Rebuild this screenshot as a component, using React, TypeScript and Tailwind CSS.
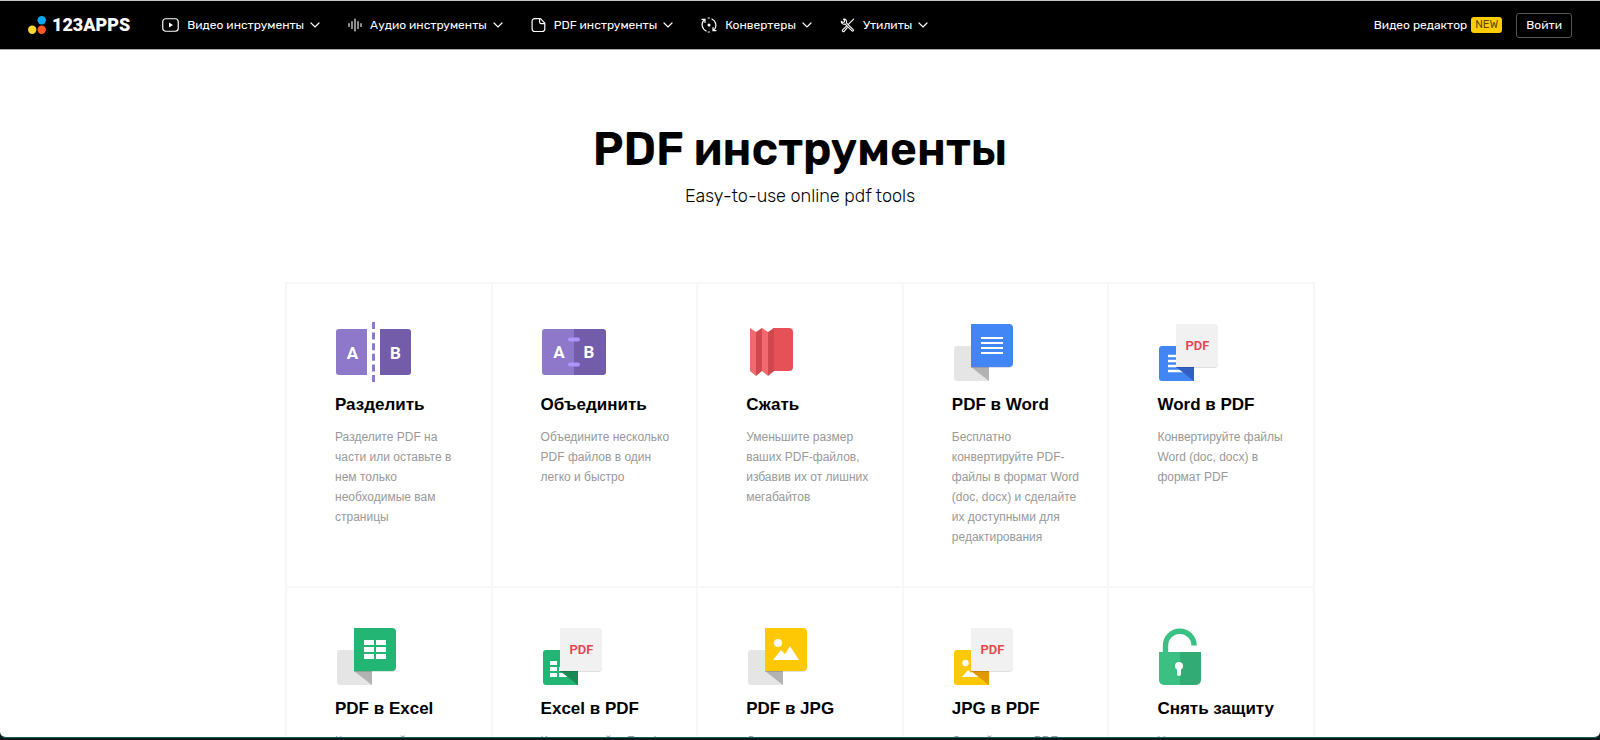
import React from 'react';

const RUBIK = "font-[Rubik,Roboto,'Liberation_Sans',sans-serif]";

type IconProps = { className?: string };

interface NavItem { label: string; icon: React.FC<IconProps>; }
interface Tool { title: string; text: string; icon: React.FC; }

/* ---------- header icons ---------- */

const VideoIcon = ({ className }: IconProps) => (
  <svg className={className} width="17" height="16" viewBox="0 0 17 16" fill="none" aria-hidden="true">
    <rect x="0.75" y="1.75" width="15.5" height="12.5" rx="3" stroke="currentColor" strokeWidth="1.2" />
    <path d="M7 5.6v4.8L11 8z" fill="currentColor" />
  </svg>
);

const AudioIcon = ({ className }: IconProps) => (
  <svg className={className} width="14" height="16" viewBox="0 0 14 16" fill="none" stroke="currentColor" strokeWidth="1.1" strokeLinecap="round" aria-hidden="true">
    <path d="M1 6.5v3M4 4.5v7M7 2v12M10 4.5v7M13 6.5v3" />
  </svg>
);

const FileIcon = ({ className }: IconProps) => (
  <svg className={className} width="15" height="16" viewBox="0 0 15 16" fill="none" stroke="currentColor" strokeWidth="1.2" strokeLinejoin="round" aria-hidden="true">
    <path d="M3.5 1.7h6l4.3 4.5v5.9a2.4 2.4 0 0 1-2.4 2.4H3.5a2.4 2.4 0 0 1-2.4-2.4v-8a2.4 2.4 0 0 1 2.4-2.4z" />
    <path d="M8.6 1.9v3.2a1.6 1.6 0 0 0 1.6 1.6h3.4" />
  </svg>
);

const ConvertIcon = ({ className }: IconProps) => (
  <svg className={className} width="16" height="16" viewBox="0 0 16 16" fill="none" stroke="currentColor" strokeWidth="1.2" strokeLinecap="round" aria-hidden="true">
    <path d="M5.2 14A6.8 6.8 0 0 1 3.3 2.8M1 2.4h3v3" />
    <path d="M10.8 2a6.8 6.8 0 0 1 1.9 11.2M15 13.6h-3v-3" />
    <path d="M7.2 1h1.2M7.2 15h1.2" />
    <circle cx="8" cy="8" r="1.5" fill="currentColor" stroke="none" />
  </svg>
);

const ToolsIcon = ({ className }: IconProps) => (
  <svg className={className} width="15" height="16" viewBox="0 0 15 16" fill="none" stroke="currentColor" strokeWidth="1.1" strokeLinecap="round" strokeLinejoin="round" aria-hidden="true">
    <path d="M13.6 2.2 8.4 7.4M6.2 9.4l-3.6 3.4a1.1 1.1 0 0 0 1.6 1.5l3-3.6" />
    <path d="M3.4 2.2a2.6 2.6 0 0 1 3 3.6l6.8 6.8a.8.8 0 0 1-1.2 1.2L5 6.9A2.6 2.6 0 0 1 1.3 4.2l1.6 1.2 1.5-.4.2-1.4z" />
  </svg>
);

const Chevron = () => (
  <svg width="10" height="6" viewBox="0 0 10 6" fill="none" stroke="currentColor" strokeWidth="1.2" strokeLinecap="round" aria-hidden="true">
    <path d="M1 1l4 4 4-4" />
  </svg>
);

/* ---------- tool icons ---------- */

const Canvas = ({ children }: { children: React.ReactNode }) => (
  <svg width="80" height="64" viewBox="0 0 80 64" fill="none" aria-hidden="true">{children}</svg>
);

const Letter = ({ x, y, children }: { x: number; y: number; children: string }) => (
  <text x={x} y={y} textAnchor="middle" fontSize="17" fontWeight="700" fill="#fff" className="font-[Roboto,sans-serif]">{children}</text>
);

const SplitIcon = () => (
  <Canvas>
    <path d="M4 9h28v46H4a3 3 0 0 1-3-3V12a3 3 0 0 1 3-3z" fill="#8d78c9" />
    <path d="M45 9h28a3 3 0 0 1 3 3v40a3 3 0 0 1-3 3H45z" fill="#735dab" />
    <path d="M38.5 2v60" stroke="#8d78c9" strokeWidth="3" strokeDasharray="7 3.6" />
    <Letter x={17.5} y={39}>A</Letter>
    <Letter x={60.5} y={39}>B</Letter>
  </Canvas>
);

const MergeIcon = () => (
  <Canvas>
    <path d="M4 9h30v46H4a3 3 0 0 1-3-3V12a3 3 0 0 1 3-3z" fill="#8d78c9" />
    <path d="M33 9h29a3 3 0 0 1 3 3v40a3 3 0 0 1-3 3H33z" fill="#735dab" />
    <rect x="27" y="17.5" width="12" height="4" rx="2" fill="#ae93fb" />
    <rect x="27" y="42.5" width="12" height="4" rx="2" fill="#ae93fb" />
    <Letter x={18} y={38}>A</Letter>
    <Letter x={48} y={38}>B</Letter>
  </Canvas>
);

const CompressIcon = () => (
  <Canvas>
    <path d="M27 8h16a4 4 0 0 1 4 4v35a4 4 0 0 1-4 4H27z" fill="#e65157" />
    <path d="M4 8l6 4v44l-6-5zM16 8l6 4v44l-6-5z" fill="#f2696f" />
    <path d="M16 8l-6 4v44l6-5zM28 8l-6 4v44l6-5z" fill="#d0484e" />
  </Canvas>
);

// Back sheet, folded corner and front sheet shared by all conversion icons
const Sheets = ({ back, fold, front, backArt, children }: {
  back: string; fold: string; front: string; backArt?: React.ReactNode; children: React.ReactNode;
}) => (
  <Canvas>
    <path d="M5 26h32v35H5a3 3 0 0 1-3-3V29a3 3 0 0 1 3-3z" fill={back} />
    {backArt}
    <path d="M19 47h18v14z" fill={fold} />
    <path d="M19 5h38a4 4 0 0 1 4 4v35a4 4 0 0 1-4 4H19z" fill="#000" opacity="0.12" />
    <path d="M19 4h38a4 4 0 0 1 4 4v35a4 4 0 0 1-4 4H19z" fill={front} />
    {children}
  </Canvas>
);

const PdfMark = () => (
  <text x="40.500" y="30" textAnchor="middle" fontSize="13" fontWeight="600" fill="#e5454b" className="font-[Roboto,sans-serif]">PDF</text>
);

const PdfToWordIcon = () => (
  <Sheets back="#e5e5e5" fold="#b2b2b2" front="#4285f4">
    <path d="M29 18h22M29 23h22M29 28h22M29 33h22" stroke="#fff" strokeWidth="2" />
  </Sheets>
);

const WordToPdfIcon = () => (
  <Sheets back="#4285f4" fold="#315fc4" front="#f1f1f1"
    backArt={<path d="M11 36h17M11 41h17M11 46h17M11 51h17" stroke="#fff" strokeWidth="2.4" />}>
    <PdfMark />
  </Sheets>
);

const PdfToExcelIcon = () => (
  <Sheets back="#e5e5e5" fold="#b2b2b2" front="#23b574">
    <path d="M29 16h10v5H29zM41 16h10v5H41zM29 23h10v5H29zM41 23h10v5H41zM29 30h10v5H29zM41 30h10v5H41z" fill="#fff" />
  </Sheets>
);

const ExcelToPdfIcon = () => (
  <Sheets back="#23b574" fold="#1a8a55" front="#f1f1f1"
    backArt={<path d="M9 37h7v4H9zM9 43h7v4H9zM9 49h7v4H9zM18 49h8v4h-8zM18 43h8v4h-8z" fill="#fff" />}>
    <PdfMark />
  </Sheets>
);

const PdfToJpgIcon = () => (
  <Sheets back="#e5e5e5" fold="#b2b2b2" front="#ffc805">
    <circle cx="32" cy="19" r="4" fill="#fff" />
    <path d="M27 36l8-10 4 4 5-8 9 14z" fill="#fff" />
  </Sheets>
);

const JpgToPdfIcon = () => (
  <Sheets back="#ffc805" fold="#e09900" front="#f1f1f1"
    backArt={<><circle cx="13.5" cy="39" r="3.2" fill="#fff" /><path d="M10 53l6-7 3 3 2-2 7 6z" fill="#fff" /></>}>
    <PdfMark />
  </Sheets>
);

const UnlockIcon = () => (
  <Canvas>
    <path d="M8.500 30v-8.500a14.300 14.300 0 0 1 28.600 0" stroke="#3bc084" strokeWidth="5.400" />
    <path d="M2 28h21v33H7a5 5 0 0 1-5-5z" fill="#3bc084" />
    <path d="M23 28h21v28a5 5 0 0 1-5 5H23z" fill="#33ab74" />
    <circle cx="22" cy="42" r="4" fill="#fff" />
    <path d="M22 43v7" stroke="#fff" strokeWidth="4" strokeLinecap="round" />
  </Canvas>
);

/* ---------- data ---------- */

const NAV: NavItem[] = [
  { label: 'Видео инструменты', icon: VideoIcon },
  { label: 'Аудио инструменты', icon: AudioIcon },
  { label: 'PDF инструменты', icon: FileIcon },
  { label: 'Конвертеры', icon: ConvertIcon },
  { label: 'Утилиты', icon: ToolsIcon },
];

const TOOLS: Tool[] = [
  { title: 'Разделить', text: 'Разделите PDF на части или оставьте в нем только необходимые вам страницы', icon: SplitIcon },
  { title: 'Объединить', text: 'Объедините несколько PDF файлов в один легко и быстро', icon: MergeIcon },
  { title: 'Сжать', text: 'Уменьшите размер ваших PDF-файлов, избавив их от лишних мегабайтов', icon: CompressIcon },
  { title: 'PDF в Word', text: 'Бесплатно конвертируйте PDF-файлы в формат Word (doc, docx) и сделайте их доступными для редактирования', icon: PdfToWordIcon },
  { title: 'Word в PDF', text: 'Конвертируйте файлы Word (doc, docx) в формат PDF', icon: WordToPdfIcon },
  { title: 'PDF в Excel', text: 'Конвертируйте документы PDF в Excel', icon: PdfToExcelIcon },
  { title: 'Excel в PDF', text: 'Конвертируйте Excel в PDF', icon: ExcelToPdfIcon },
  { title: 'PDF в JPG', text: 'Сохраните страницы PDF в JPG', icon: PdfToJpgIcon },
  { title: 'JPG в PDF', text: 'Создайте ваш PDF из JPG', icon: JpgToPdfIcon },
  { title: 'Снять защиту', text: 'Удалите пароль из защищенного PDF', icon: UnlockIcon },
];

function Logo() {
  return (
    <a href="#" className="flex items-center gap-1.5">
      <svg width="18" height="18" viewBox="0 0 18 18" aria-hidden="true">
        <circle cx="13.700" cy="4.300" r="4.200" fill="#03a9f4" />
        <circle cx="4.200" cy="13.700" r="4.200" fill="#fdd835" />
        <circle cx="13.700" cy="13.700" r="4.200" fill="#ff5722" />
      </svg>
      <span className="font-[Roboto,sans-serif] text-[18px] leading-6 font-black">123APPS</span>
    </a>
  );
}

function Header() {
  return (
    <header className={`flex h-[50px] shrink-0 items-center border-y border-t-[#bfc4c4] border-b-[#a8a8a8] bg-black px-7 text-[12px] text-white ${RUBIK}`}>
      <Logo />
      <nav className="ml-8 flex items-center gap-7">
        {NAV.map(({ label, icon: Icon }) => (
          <button key={label} type="button" className="flex items-center whitespace-nowrap">
            <Icon className="mr-2" />
            {label}
            <span className="ml-1.5"><Chevron /></span>
          </button>
        ))}
      </nav>
      <div className="ml-auto flex items-center whitespace-nowrap">
        <a href="#" className="flex items-center gap-1">
          Видео редактор
          <span className="rounded-[3px] bg-[#ffcc00] px-1 text-[11px] leading-4 text-[#5c4a00]">NEW</span>
        </a>
        <button type="button" className="ml-3.5 h-[25px] rounded-[3px] border border-[#555] px-[9px]">Войти</button>
      </div>
    </header>
  );
}

function ToolCard({ title, text, icon: Icon }: Tool) {
  return (
    <a href="#" className="block border-r-2 border-b-2 border-[#f7f7f7] pt-9 pr-6 pb-[39px] pl-12">
      <Icon />
      <h2 className="mt-[9px] text-[17px] leading-6 font-semibold whitespace-nowrap text-black">{title}</h2>
      <p className="mt-2.5 text-[12px] leading-5 text-[#999]">{text}</p>
    </a>
  );
}

export default function App() {
  return (
    <div className="h-screen bg-[#06181b] pb-[2px]">
      <div className="flex h-full flex-col overflow-hidden rounded-b-md border-b border-[#1b5f62] bg-white">
        <Header />
        <main className="px-6 font-['Liberation_Sans',Arial,sans-serif]">
          <div className={`pt-[72px] text-center text-black ${RUBIK}`}>
            <h1 className="text-[46px] leading-[56px] font-semibold">PDF инструменты</h1>
            <p className="mt-1 text-[18px] leading-7 font-light">Easy-to-use online pdf tools</p>
          </div>
          <div className="mx-auto mt-[72px] grid max-w-[1030px] grid-cols-5 border-t-2 border-l-2 border-[#f7f7f7]">
            {TOOLS.map(tool => <ToolCard key={tool.title} {...tool} />)}
          </div>
        </main>
      </div>
    </div>
  );
}
